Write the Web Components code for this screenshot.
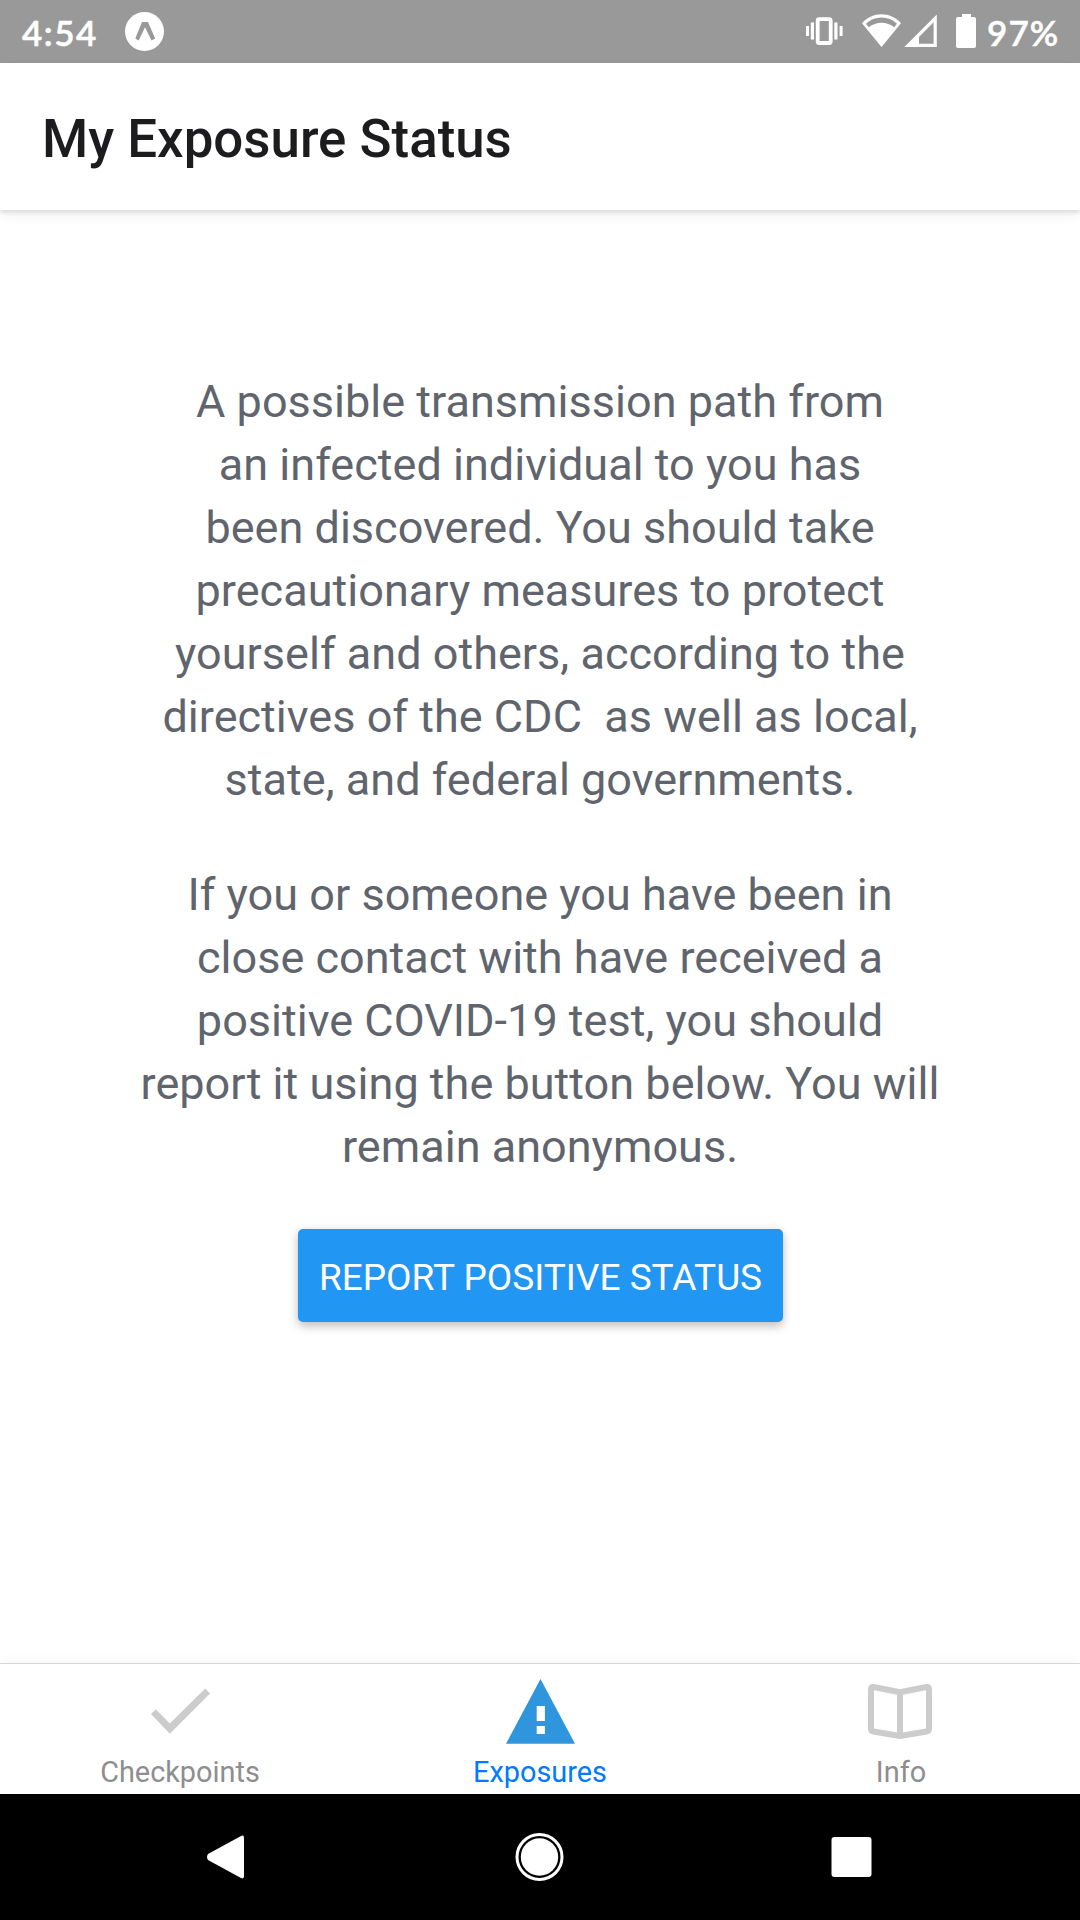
<!DOCTYPE html>
<html lang="en">
<head>
<meta charset="utf-8">
<title>My Exposure Status</title>
<style>
html,body{margin:0;padding:0;background:#fff}
body{width:1080px;height:1920px;overflow:hidden;font-family:Roboto,"Liberation Sans",sans-serif}
</style>
</head>
<body>
<exposure-app></exposure-app>
<script>
const define = (name, html) => customElements.define(name, class extends HTMLElement {
  constructor() {
    super();
    const t = document.createElement('template');
    t.innerHTML = html;
    this.attachShadow({mode: 'open'}).append(t.content.cloneNode(true));
  }
});

define('status-bar', `
<style>
:host{display:flex;align-items:center;justify-content:space-between;height:63px;flex:none;background:#999;color:#fff;font:600 35px/63px Lato,sans-serif;box-sizing:border-box;padding:0 20px 0 22px}
div{display:flex;height:63px}
svg{display:block;fill:#fff;flex:none}
span{-webkit-text-stroke:.5px #fff}
.clock{width:103px;letter-spacing:1.5px;padding-top:1px}
.pct{width:73px;white-space:nowrap;padding-top:1px;letter-spacing:1.1px}
</style>
<div>
  <span class="clock">4:54</span>
  <svg width="40" height="63" viewBox="125 0 40 63"><circle cx="144.500" cy="31.500" r="19.500"/><path d="M142 22h6l7.200 16.500-3.700 2-6.500-13.200L138.700 40.600l-3.400-2z" fill="#999"/></svg>
</div>
<div>
  <svg width="181" height="63" viewBox="806 0 181 63">
    <rect x="817.700" y="19.200" width="13" height="23.800" rx="1.500" fill="none" stroke="#fff" stroke-width="3.800"/>
    <path d="M810.800 22.500h3.200v17h-3.200zM834.300 22.500h3.200v17h-3.200zM806 26h3v10H806zM839.600 26h3v10h-3z"/>
    <path fill-rule="evenodd" d="M862 23.200C872.500 11.300 890.500 11.300 901 23.200L881.500 47zM866 23.800L868.800 27.200C876 21.200 887 21.200 894.200 27.200L897 23.800C888.500 15.500 874.500 15.500 866 23.800z"/>
    <path fill-rule="evenodd" d="M936.800 14.500V47H904.300zM933.600 22.200L919 37V43.700H933.600z"/>
    <path d="M962 14h9v3h3q2 0 2 2v27q0 2-2 2h-16q-2 0-2-2V19q0-2 2-2h4z"/>
  </svg>
  <span class="pct">97%</span>
</div>`);

define('app-header', `
<style>
:host{display:flex;align-items:center;height:147px;flex:none;background:#fff;color:#1c1c1e;padding-left:42px;box-shadow:0 3px 4px rgba(0,0,0,.1),0 5px 14px rgba(0,0,0,.05);font:500 52.850px/62px Roboto,sans-serif}
h1{margin:0;font:inherit;white-space:nowrap;padding-top:5px}
</style>
<h1><slot></slot></h1>`);

define('info-text', `
<style>
:host{display:block;text-align:center;color:#60646d;font:400 45px/63px Roboto,sans-serif;letter-spacing:.02px;margin-bottom:52px}
p{margin:0;white-space:pre}
</style><p><slot></slot></p>`);

define('raised-button', `
<style>
:host{display:flex;margin-top:-1px}
button{width:485px;height:93px;border:0;padding:5px 0 0 1px;border-radius:5px;background:#2196f3;color:#fff;font:400 37px/44px Roboto,sans-serif;white-space:nowrap;box-shadow:0 5px 10px rgba(0,0,0,.2),0 0 10px rgba(0,0,0,.08)}
</style><button><slot></slot></button>`);

define('tab-item', `
<style>
:host{display:flex;flex-direction:column;align-items:center;flex:1;color:#8e8e8f;font:400 28.875px/34px Roboto,sans-serif}
::slotted(svg){display:block;width:80px;height:80px;flex:none}
.label{margin-top:11px}
</style><slot name="icon"></slot><span class="label"><slot></slot></span>`);

define('tab-bar', `
<style>
:host{display:flex;height:130px;flex:none;border-top:1px solid #d8d8d8;background:#fff;box-shadow:0 -2px 10px rgba(0,0,0,.04)}
.active{color:#007aff}
</style>
<tab-item><svg slot="icon" viewBox="140 1664 80 80"><path fill="#ccc" d="M151 1714l4.800-4.700 14 14.100 35.400-34.900 4.900 4.900-40.300 40.300z"/></svg>Checkpoints</tab-item>
<tab-item class="active"><svg slot="icon" viewBox="500 1664 80 80"><path fill="#2f95dc" fill-rule="evenodd" d="M540.500 1679L575 1743.700H506zM536.700 1706v15h8.200v-15zM536.700 1726v8h8.200v-8z"/></svg>Exposures</tab-item>
<tab-item><svg slot="icon" viewBox="860 1664 80 80"><path fill="none" stroke="#ccc" stroke-width="6" stroke-linejoin="round" d="M873.500 1687L900 1692.200 926.500 1687Q929 1686.600 929 1689.500V1728.500Q929 1731 926.500 1731.500L900 1736 873.500 1731.500Q871 1731 871 1728.500V1689.500Q871 1686.600 873.500 1687zM900 1692.200V1736"/></svg><span style="padding-left:2px">Info</span></tab-item>`);

define('nav-bar', `
<style>
:host{display:flex;height:126px;flex:none;background:#000;align-items:center;justify-content:space-between;padding:0 208px 0 205px;box-sizing:border-box}
svg{display:block;fill:#fff}
</style>
<svg width="40" height="50" viewBox="0 0 40 50"><path d="M36 4Q39 2.500 39 6V44Q39 47.500 36 46L3 28Q1 25 3 22z"/></svg>
<svg width="50" height="50" viewBox="-1.500 0 50 50" overflow="visible"><circle cx="25" cy="25" r="22.500" fill="none" stroke="#fff" stroke-width="3"/><circle cx="25" cy="25" r="18.700"/></svg>
<svg width="41" height="50" viewBox="0 0 41 50"><rect x=".5" y="5" width="40" height="40" rx="3"/></svg>`);

define('exposure-app', `
<style>
:host{display:flex;flex-direction:column;width:1080px;height:1920px;background:#fff}
main{flex:1;display:flex;flex-direction:column;align-items:center;padding-top:160px;min-height:0;box-sizing:border-box}
app-header{position:relative}
</style>
<status-bar></status-bar>
<app-header>My Exposure Status</app-header>
<main>
<info-text>A possible transmission path from
an infected individual to you has
been discovered. You should take
precautionary measures to protect
yourself and others, according to the
directives of the CDC  as well as local,
state, and federal governments.</info-text>
<info-text>If you or someone you have been in
close contact with have received a
positive COVID-19 test, you should
report it using the button below. You will
remain anonymous.</info-text>
<raised-button>REPORT POSITIVE STATUS</raised-button>
</main>
<tab-bar></tab-bar>
<nav-bar></nav-bar>`);
</script>
</body>
</html>
